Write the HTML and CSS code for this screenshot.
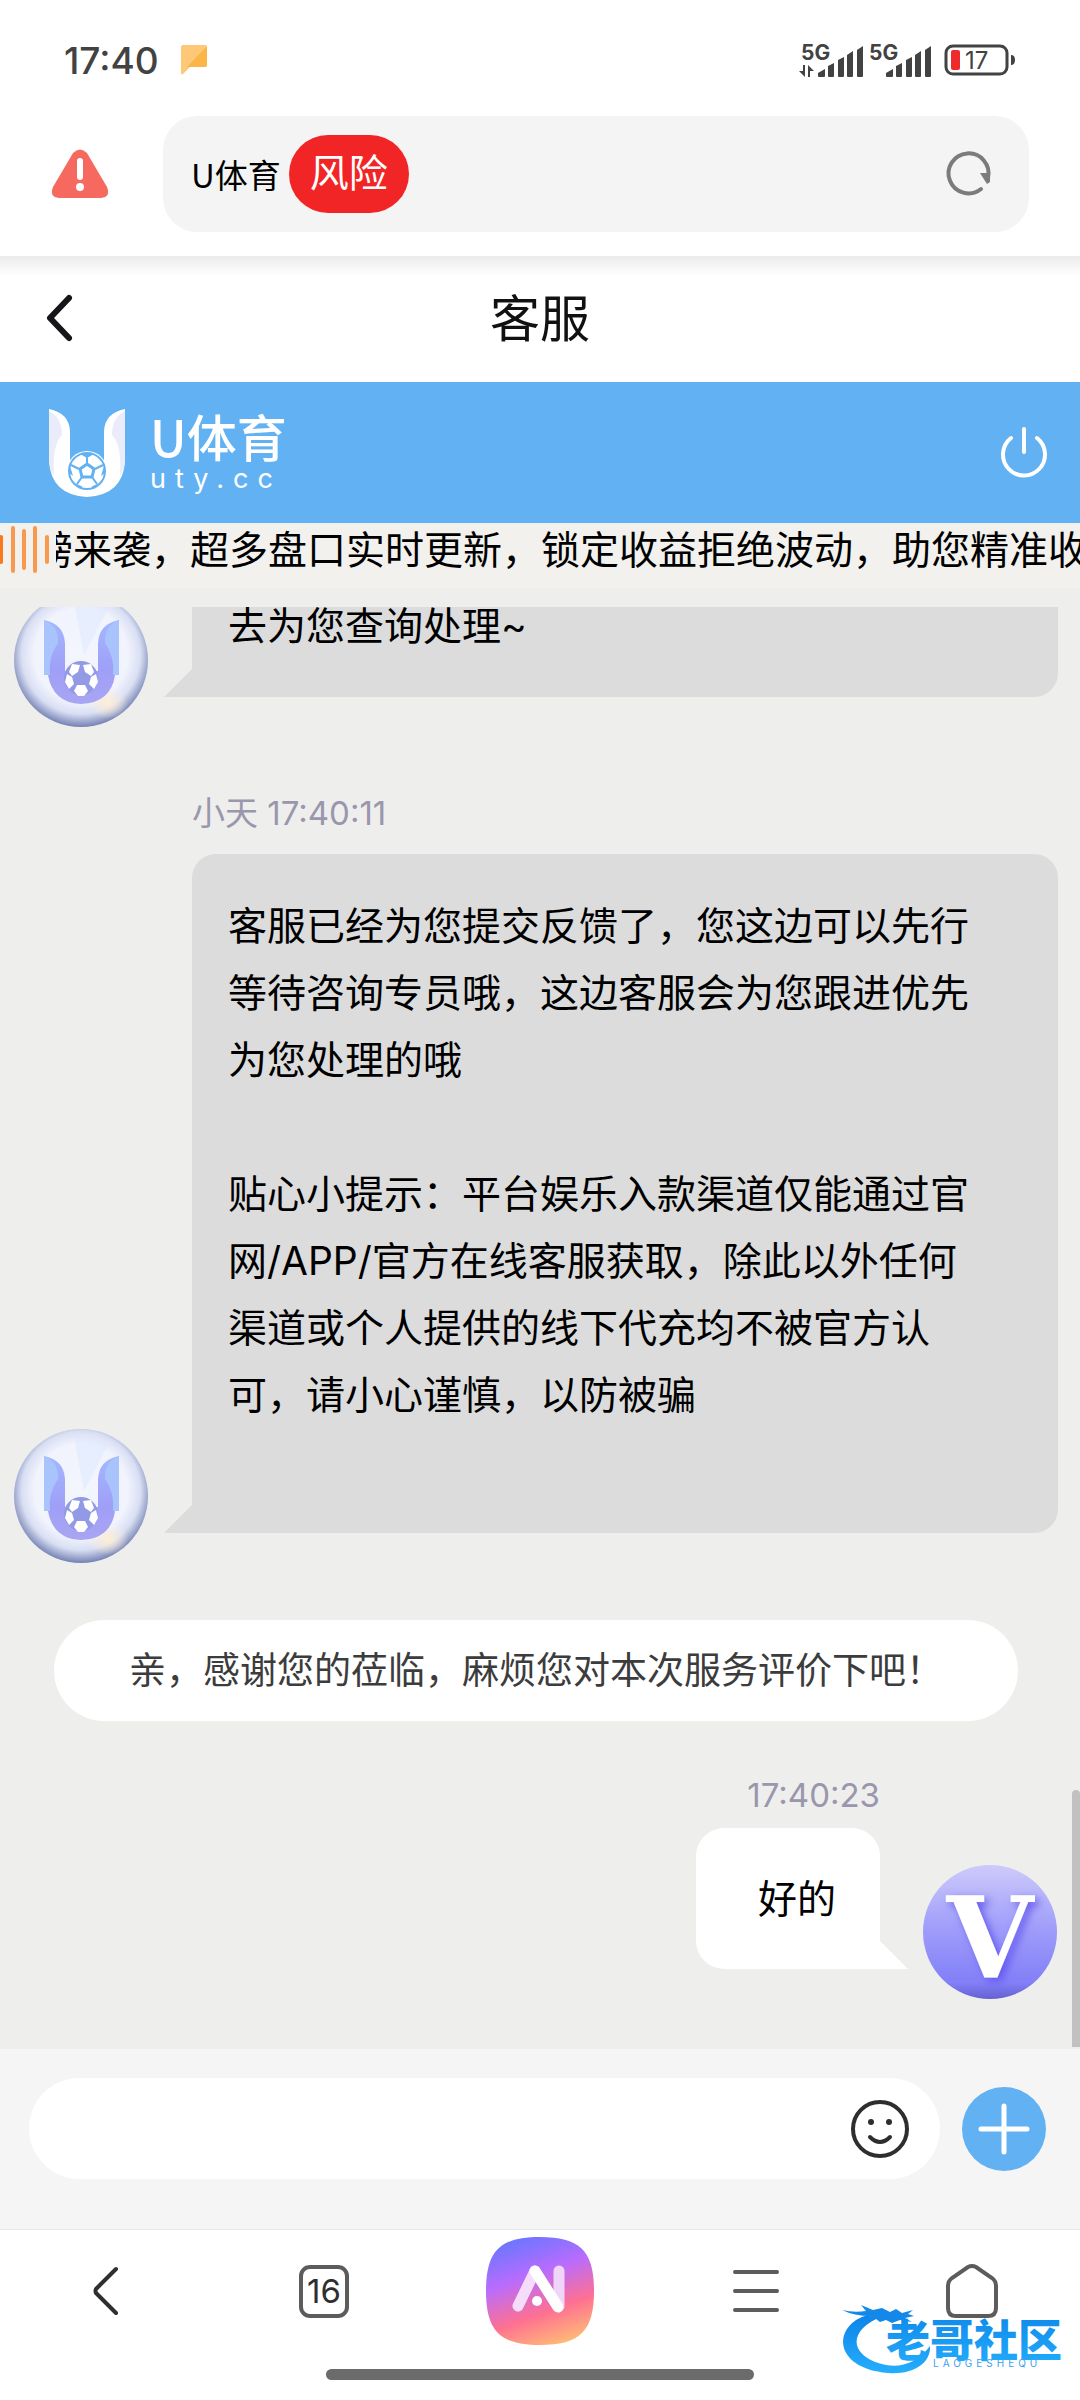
FILE: index.html
```html
<!DOCTYPE html>
<html lang="zh-CN">
<head>
  <meta charset="UTF-8" />
  <meta name="viewport" content="width=device-width, initial-scale=1" />
  <title>客服</title>
  <link rel="stylesheet" href="styles.css">
</head>
<body>
  <div class="status-bar">
    <span class="clock">17:40</span>
    <svg class="status-note" width="28" height="30" viewBox="0 0 28 30">
      <path d="M2 0H24a2 2 0 0 1 2 2V20a2 2 0 0 1-2 2H9L2 29Q0 30 0 28V2Q0 0 2 0Z" fill="#fdc877" />
      <path d="M26 1V20a2 2 0 0 1-2 2H6Z" fill="#fcb648" />
    </svg>
    <div class="status-icons">
      <svg width="66" height="36" viewBox="0 0 66 36" fill="#424242">
        <text class="net" x="3" y="18">5G</text>
        <path d="M5 23h2v12l-6-6h4zM10 35V23l6 6h-4v6z" />
        <path d="M20 34v-3l7-4v7q0 1-1 1h-5q-1 0-1-1zM30 34V24l6-3v13q0 1-1 1h-4q-1 0-1-1zM40 34V18l6-3v19q0 1-1 1h-4q-1 0-1-1zM49 34V13l6-4v25q0 1-1 1h-4q-1 0-1-1zM59 34V8l6-4v30q0 1-1 1h-4q-1 0-1-1z" />
      </svg>
      <svg width="66" height="36" viewBox="0 0 66 36" fill="#424242">
        <text class="net" x="3" y="18">5G</text>
        <path d="M20 34v-3l7-4v7q0 1-1 1h-5q-1 0-1-1zM30 34V24l6-3v13q0 1-1 1h-4q-1 0-1-1zM40 34V18l6-3v19q0 1-1 1h-4q-1 0-1-1zM49 34V13l6-4v25q0 1-1 1h-4q-1 0-1-1zM59 34V8l6-4v30q0 1-1 1h-4q-1 0-1-1z" />
      </svg>
      <svg class="battery" width="72" height="32" viewBox="0 0 72 32">
        <rect x="2" y="2" width="61" height="28" rx="7" fill="none" stroke="#424242" stroke-width="3" />
        <rect x="7" y="6" width="9" height="20" rx="2" fill="#ee2a2a" />
        <text class="level" x="21" y="25">17</text>
        <path d="M67 11q4 0 4 5t-4 5z" fill="#424242" />
      </svg>
    </div>
  </div>

  <div class="browser-bar">
    <button class="warn" aria-label="风险提示">
      <svg width="58" height="50" viewBox="0 0 58 50">
        <path d="M22 4Q29-3 36 4L56 38Q60 48 50 49H8Q-2 48 2 38Z" fill="#f5695e" />
        <path d="M29 12V28" stroke="#fff" stroke-width="6" stroke-linecap="round" />
        <circle cx="29" cy="38" r="4" fill="#fff" />
      </svg>
    </button>
    <div class="address">
      <span class="site">U体育</span>
      <span class="risk">风险</span>
      <button class="reload" aria-label="刷新">
        <svg width="44" height="46" viewBox="0 0 44 46">
          <path d="M34 38A20 20 0 1 1 41 27" fill="none" stroke="#7b7b7b" stroke-width="4" stroke-linecap="round" />
          <path d="M33 22h10v9l-3 2z" fill="#7b7b7b" />
        </svg>
      </button>
    </div>
  </div>

  <header class="title-bar">
    <button class="back" aria-label="返回">
      <svg width="28" height="48" viewBox="0 0 28 48">
        <path d="M23 3L4 23L23 43" fill="none" stroke="#15151a" stroke-width="6" stroke-linecap="round" stroke-linejoin="round" />
      </svg>
    </button>
    <h1>客服</h1>
  </header>

  <div class="brand-bar">
    <svg width="76" height="88" viewBox="0 0 76 88">
      <path d="M0 0Q20 4 21 22V56H55V22Q56 4 76 0V52Q74 86 38 88Q2 86 0 52Z" fill="#fff" />
      <path d="M0 2Q13 8 13 26Q3 36 5 66Q0 60 0 50ZM76 2Q63 8 63 26Q73 36 71 66Q76 60 76 50Z" fill="#ebecfb" />
      <circle cx="38" cy="62" r="20" fill="#fff" />
      <circle cx="38" cy="62" r="18" fill="#fff" stroke="#62b2f3" stroke-width="2" />
      <path d="M38 55l7 5-2 8H33l-2-8z" fill="#fff" stroke="#62b2f3" stroke-width="3" />
      <path d="M38 46V54M46 60l8-4M43 68l5 7M33 68l-5 7M30 60l-8-4" stroke="#62b2f3" stroke-width="2" />
      <path d="M31 45h14l-7 4zM21 57l3 10-4-3zM55 57l-3 10 4-3zM26 74l8 4-4 0zM50 74l-8 4 4 0z" fill="#62b2f3" />
    </svg>
    <div class="brand-text">
      <strong>U体育</strong>
      <span>uty.cc</span>
    </div>
    <button class="power" aria-label="退出">
      <svg width="48" height="56" viewBox="0 0 48 56">
        <path d="M11 13A21 21 0 1 0 37 13M24 4V27" fill="none" stroke="#fff" stroke-width="4" stroke-linecap="round" />
      </svg>
    </button>
  </div>

  <div class="notice">
    <svg width="50" height="48" viewBox="0 0 50 48" stroke-linecap="round">
      <path d="M1 11V36" stroke="#f97a1c" stroke-width="4" />
      <path d="M13 2V45M24 5V42M35 2V45M47 11V36" stroke="#f79a50" stroke-width="4" />
    </svg>
    <p>磅来袭，超多盘口实时更新，锁定收益拒绝波动，助您精准收益</p>
  </div>

  <main class="chat">
    <div class="chat-list">
      <div class="row">
        <svg class="avatar" viewBox="0 0 135 135">
          <defs>
            <radialGradient id="pearl" cx="50%" cy="46%" r="54%">
              <stop offset="0" stop-color="#f4f6fe" />
              <stop offset="0.65" stop-color="#f1f3fd" />
              <stop offset="0.82" stop-color="#d9dff3" />
              <stop offset="1" stop-color="#7482b4" />
            </radialGradient>
            <linearGradient id="wing" x1="0" y1="0" x2="0" y2="1">
              <stop offset="0" stop-color="#a3b8ff" />
              <stop offset="0.6" stop-color="#9f9ff7" />
              <stop offset="1" stop-color="#a9a5f3" />
            </linearGradient>
            <radialGradient id="glow">
              <stop offset="0" stop-color="#fdeed6" />
              <stop offset="1" stop-color="#fdeed6" stop-opacity="0" />
            </radialGradient>
            <g id="agent">
              <circle cx="67" cy="67" r="67" fill="url(#pearl)" />
              <path d="M70 62L60 8Q80 6 94 16Z" fill="#dce8fd" opacity="0.5" />
              <ellipse cx="94" cy="110" rx="20" ry="16" fill="url(#glow)" />
              <path d="M30 27Q50 31 51 50V78H84V50Q85 31 105 27V82H101Q97 110 67 111Q39 110 34 82H30Z" fill="url(#wing)" />
              <path d="M30 27Q45 33 44 50Q34 64 36 82H30ZM105 27Q90 33 91 50Q101 64 99 82H105Z" fill="#a9c3fd" />
              <circle cx="67" cy="85" r="17" fill="#9299e5" />
              <g fill="#fff">
                <path d="M58 71l8 1-2 7-6 4-3-4z" />
                <path d="M77 71l-8 1 2 7 6 4 3-4z" />
                <path d="M53 81l5 3 2 7-5 5-4-7z" />
                <path d="M82 81l-5 3-2 7 5 5 4-7z" />
                <path d="M63 92h8l3 6-4 5h-6l-4-5z" />
              </g>
            </g>
          </defs>
          <use href="#agent" />
        </svg>
        <p class="bubble">去为您查询处理~</p>
      </div>

      <div class="meta">小天 17:40:11</div>
      <div class="row">
        <svg class="avatar" viewBox="0 0 135 135"><use href="#agent" /></svg>
        <p class="bubble">客服已经为您提交反馈了，您这边可以先行等待咨询专员哦，这边客服会为您跟进优先为您处理的哦<br><br>贴心小提示：平台娱乐入款渠道仅能通过官网/APP/官方在线客服获取，除此以外任何渠道或个人提供的线下代充均不被官方认可，请小心谨慎，以防被骗<br><br></p>
      </div>

      <p class="system">亲，感谢您的莅临，麻烦您对本次服务评价下吧！</p>

      <div class="meta meta-me">17:40:23</div>
      <div class="row row-me">
        <p class="bubble bubble-me">好的</p>
        <svg class="avatar" viewBox="0 0 135 135">
          <defs>
            <linearGradient id="violet" x1="0" y1="0" x2="0" y2="1">
              <stop offset="0" stop-color="#cdcbfa" />
              <stop offset="0.45" stop-color="#a19ffa" />
              <stop offset="0.88" stop-color="#827ff8" />
              <stop offset="1" stop-color="#6461d2" />
            </linearGradient>
            <filter id="shade" x="-20%" y="-20%" width="140%" height="140%">
              <feDropShadow dx="4" dy="4" stdDeviation="4" flood-color="#6558ef" />
            </filter>
          </defs>
          <circle cx="67" cy="67" r="67" fill="url(#violet)" />
          <text class="vip" x="67" y="112" filter="url(#shade)">V</text>
        </svg>
      </div>
    </div>
    <div class="scroll-thumb"></div>
  </main>

  <form class="composer">
    <div class="field">
      <input type="text" aria-label="输入消息" />
      <button type="button" aria-label="表情">
        <svg width="60" height="60" viewBox="0 0 60 60">
          <circle cx="30" cy="30" r="27" fill="none" stroke="#2e2e2e" stroke-width="4" />
          <circle cx="21" cy="23" r="3" fill="#2e2e2e" />
          <circle cx="39" cy="23" r="3" fill="#2e2e2e" />
          <path d="M20 38Q30 48 40 38" fill="none" stroke="#2e2e2e" stroke-width="4" stroke-linecap="round" />
        </svg>
      </button>
    </div>
    <button type="button" class="plus" aria-label="更多">
      <svg width="50" height="50" viewBox="0 0 50 50">
        <path d="M25 2V48M2 25H48" stroke="#fff" stroke-width="5" stroke-linecap="round" />
      </svg>
    </button>
  </form>

  <nav class="toolbar">
    <div class="tools">
      <button aria-label="后退">
        <svg width="30" height="52" viewBox="0 0 30 52">
          <path d="M23 4L3 24Q2 26 3 28L23 48" fill="none" stroke="#2f2f2f" stroke-width="4" stroke-linecap="round" stroke-linejoin="round" />
        </svg>
      </button>
      <button aria-label="标签页"><span class="tabs">16</span></button>
      <button aria-label="AI">
        <svg width="108" height="108" viewBox="0 0 108 108">
          <defs>
            <linearGradient id="ai" x1="0.3" y1="0" x2="0.65" y2="1">
              <stop offset="0" stop-color="#6a76ff" />
              <stop offset="0.35" stop-color="#b86cfe" />
              <stop offset="0.7" stop-color="#fe7092" />
              <stop offset="1" stop-color="#ffb877" />
            </linearGradient>
          </defs>
          <path d="M54 0C94 0 108 14 108 54S94 108 54 108S0 94 0 54S14 0 54 0Z" fill="url(#ai)" />
          <g fill="none" stroke-width="11" stroke-linecap="round" stroke-linejoin="round">
            <path d="M32 69L49 34" stroke="#f5dcfb" />
            <path d="M73 34V69" stroke="#f0d5fa" />
            <path d="M49 34L72 70" stroke="#fff" />
          </g>
          <circle cx="51" cy="64" r="5" fill="#fff" />
        </svg>
      </button>
      <button aria-label="菜单">
        <svg width="48" height="44" viewBox="0 0 48 44">
          <path d="M3 3H45M3 22H45M3 41H45" stroke="#5c5c5c" stroke-width="4" stroke-linecap="round" />
        </svg>
      </button>
      <button aria-label="主页">
        <svg width="52" height="54" viewBox="0 0 52 54">
          <path d="M22 3Q26 1 30 3L46 14Q50 17 50 22V44Q50 52 42 52H10Q2 52 2 44V22Q2 17 6 14Z" fill="none" stroke="#5c5c5c" stroke-width="4" />
        </svg>
      </button>
    </div>
    <div class="home-line"></div>
    <svg class="watermark" width="226" height="76" viewBox="0 0 226 76">
      <defs>
        <linearGradient id="sea" x1="0" y1="0" x2="0" y2="1">
          <stop offset="0" stop-color="#0c84e8" />
          <stop offset="1" stop-color="#25aefc" />
        </linearGradient>
      </defs>
      <path d="M26 11C-9 20-11 64 46 69C70 71 89 60 88 42C76 58 60 64 44 61C10 54 4 30 34 15Z" fill="url(#sea)" />
      <path d="M0 6Q12 9 24 7L19 1L31 6L40 4L48 8L54 5L60 9L71 6L66 10L72 12L63 14L70 18L58 16L50 19L44 16L38 18L34 15L25 17L29 12Q12 12 0 6Z" fill="#1488e8" />
      <text class="wm-name" x="44" y="53" fill="url(#sea)">老哥社区</text>
      <text class="wm-sub" x="91" y="63">LAOGESHEQU</text>
    </svg>
  </nav>
</body>
</html>
```
FILE: styles.css
```css
* {
  box-sizing: border-box;
}
body {
  margin: 0;
  height: 100vh;
  display: flex;
  flex-direction: column;
  overflow: hidden;
  background: #fff;
  color: #000;
  font-family: Inter, "Noto Sans CJK SC", sans-serif;
  font-size: 39px;
}
h1, p {
  margin: 0;
}
svg {
  display: block;
  flex-shrink: 0;
  overflow: visible;
}
button {
  display: flex;
  align-items: center;
  justify-content: center;
  padding: 0;
  border: none;
  background: none;
  color: inherit;
  font: inherit;
  cursor: pointer;
}

/* system status */
.status-bar {
  height: 116px;
  padding: 4px 64px 0;
  display: flex;
  align-items: center;
}
.clock {
  color: #424242;
  font-size: 37px;
  font-weight: 500;
}
.status-note {
  margin-left: 22px;
}
.status-icons {
  margin-left: auto;
  display: flex;
  align-items: center;
  gap: 2px;
}
.net {
  font-size: 21px;
  font-weight: 700;
}
.battery {
  margin-left: 10px;
}
.level {
  font-size: 24px;
  fill: #424242;
}

/* browser address bar */
.browser-bar {
  height: 140px;
  padding: 0 51px 24px;
  display: flex;
  align-items: center;
  gap: 54px;
}
.address {
  flex: 1;
  height: 116px;
  padding: 0 38px 0 28px;
  display: flex;
  align-items: center;
  background: #f4f4f4;
  border-radius: 34px;
}
.site {
  font-family: "Noto Sans CJK SC", sans-serif;
  font-size: 33px;
  line-height: 44px;
}
.risk {
  height: 78px;
  margin-left: 8px;
  padding: 0 21px;
  border-radius: 39px;
  background: #f12525;
  color: #fff;
  line-height: 76px;
}
.reload {
  margin-left: auto;
}

.title-bar {
  height: 126px;
  padding: 0 46px;
  display: grid;
  grid-template-columns: 1fr auto 1fr;
  align-items: center;
  background: linear-gradient(#ebebeb, #fff 20px);
}
.title-bar h1 {
  color: #111;
  font-size: 50px;
  font-weight: 400;
  line-height: 60px;
}
.back {
  justify-self: start;
}

.brand-bar {
  height: 141px;
  padding: 0 32px 0 49px;
  display: flex;
  align-items: center;
  gap: 25px;
  background: #62b2f3;
  color: #fff;
}
.brand-text {
  display: flex;
  flex-direction: column;
}
.brand-text strong {
  font-family: "Noto Sans CJK SC", sans-serif;
  font-size: 50px;
  font-weight: 500;
  line-height: 52px;
}
.brand-text span {
  font-size: 27px;
  letter-spacing: 9px;
  line-height: 36px;
}
.power {
  margin-left: auto;
}

/* scrolling notice */
.notice {
  height: 65px;
  padding-bottom: 12px;
  display: flex;
  align-items: center;
  gap: 6px;
  background: #f2f1ed;
}
.notice p {
  flex: 1;
  overflow: hidden;
  text-indent: -22px;
  white-space: nowrap;
  line-height: 52px;
}

/* messages */
.chat {
  position: relative;
  flex: 1;
  min-height: 0;
  padding-top: 19px;
  display: flex;
  background: #eeeeec;
}
.chat-list {
  flex: 1;
  padding: 0 22px 49px 14px;
  display: flex;
  flex-direction: column;
  justify-content: flex-end;
  overflow: hidden;
}
.row {
  flex-shrink: 0;
  display: flex;
  align-items: flex-end;
  gap: 43px;
}
.row-me {
  justify-content: flex-end;
}
.avatar {
  width: 135px;
  height: 135px;
}
.bubble {
  position: relative;
  flex: 1;
  margin-bottom: 31px;
  padding: 38px 72px 38px 36px;
  border-radius: 24px 24px 24px 0;
  background: #dcdcdc;
  line-height: 67px;
}
.bubble::before {
  content: "";
  position: absolute;
  left: -28px;
  bottom: 0;
  width: 28px;
  height: 28px;
  background: inherit;
  clip-path: polygon(100% 0, 100% 100%, 0 100%);
}
.bubble-me {
  flex: none;
  padding: 37px 44px 37px 62px;
  border-radius: 28px 28px 0 28px;
  background: #fff;
}
.bubble-me::before {
  left: auto;
  right: -28px;
  clip-path: polygon(0 0, 100% 100%, 0 100%);
}
.meta {
  flex-shrink: 0;
  margin: 65px 0 21px 178px;
  color: #9a96ad;
  font-size: 33px;
  line-height: 40px;
}
.meta-me {
  margin: 54px 178px 13px 0;
  text-align: right;
}
.system {
  flex-shrink: 0;
  margin: 56px 40px 0;
  border-radius: 51px;
  background: #fff;
  color: #3c3c3c;
  font-size: 37px;
  line-height: 101px;
  text-align: center;
}
.scroll-thumb {
  position: absolute;
  right: 0;
  bottom: 2px;
  width: 8px;
  height: 257px;
  border-radius: 4px 4px 0 0;
  background: #c1c1c1;
}
.vip {
  fill: #fff;
  font-family: "DejaVu Serif", serif;
  font-size: 112px;
  font-weight: 700;
  text-anchor: middle;
}

/* message input */
.composer {
  height: 180px;
  padding: 29px 34px 50px 29px;
  display: flex;
  align-items: center;
  gap: 22px;
  background: #f5f5f5;
}
.field {
  flex: 1;
  height: 101px;
  padding: 0 30px 0 40px;
  display: flex;
  align-items: center;
  border-radius: 51px;
  background: #fff;
}
.field input {
  flex: 1;
  height: 60px;
  border: none;
  outline: none;
  background: none;
  font: inherit;
}
.plus {
  width: 84px;
  height: 84px;
  border-radius: 50%;
  background: #62b2f3;
}

/* browser toolbar */
.toolbar {
  position: relative;
  height: 171px;
  padding-top: 7px;
  border-top: 1px solid #e8e8e8;
}
.tools {
  display: flex;
  align-items: center;
}
.tools button {
  flex: 1;
  height: 108px;
}
.tabs {
  width: 50px;
  height: 53px;
  border: 4px solid #5c5c5c;
  border-radius: 11px;
  color: #2f2f2f;
  font-size: 33px;
  line-height: 45px;
}
.home-line {
  width: 428px;
  height: 11px;
  margin: 24px auto 0;
  border-radius: 6px;
  background: #6b6b6b;
}
.watermark {
  position: absolute;
  right: 12px;
  bottom: 20px;
}
.wm-name {
  font-family: "Noto Sans CJK SC", sans-serif;
  font-size: 44px;
  font-weight: 900;
}
.wm-sub {
  fill: #3aa2f0;
  font-size: 10px;
  letter-spacing: 4px;
}
```
